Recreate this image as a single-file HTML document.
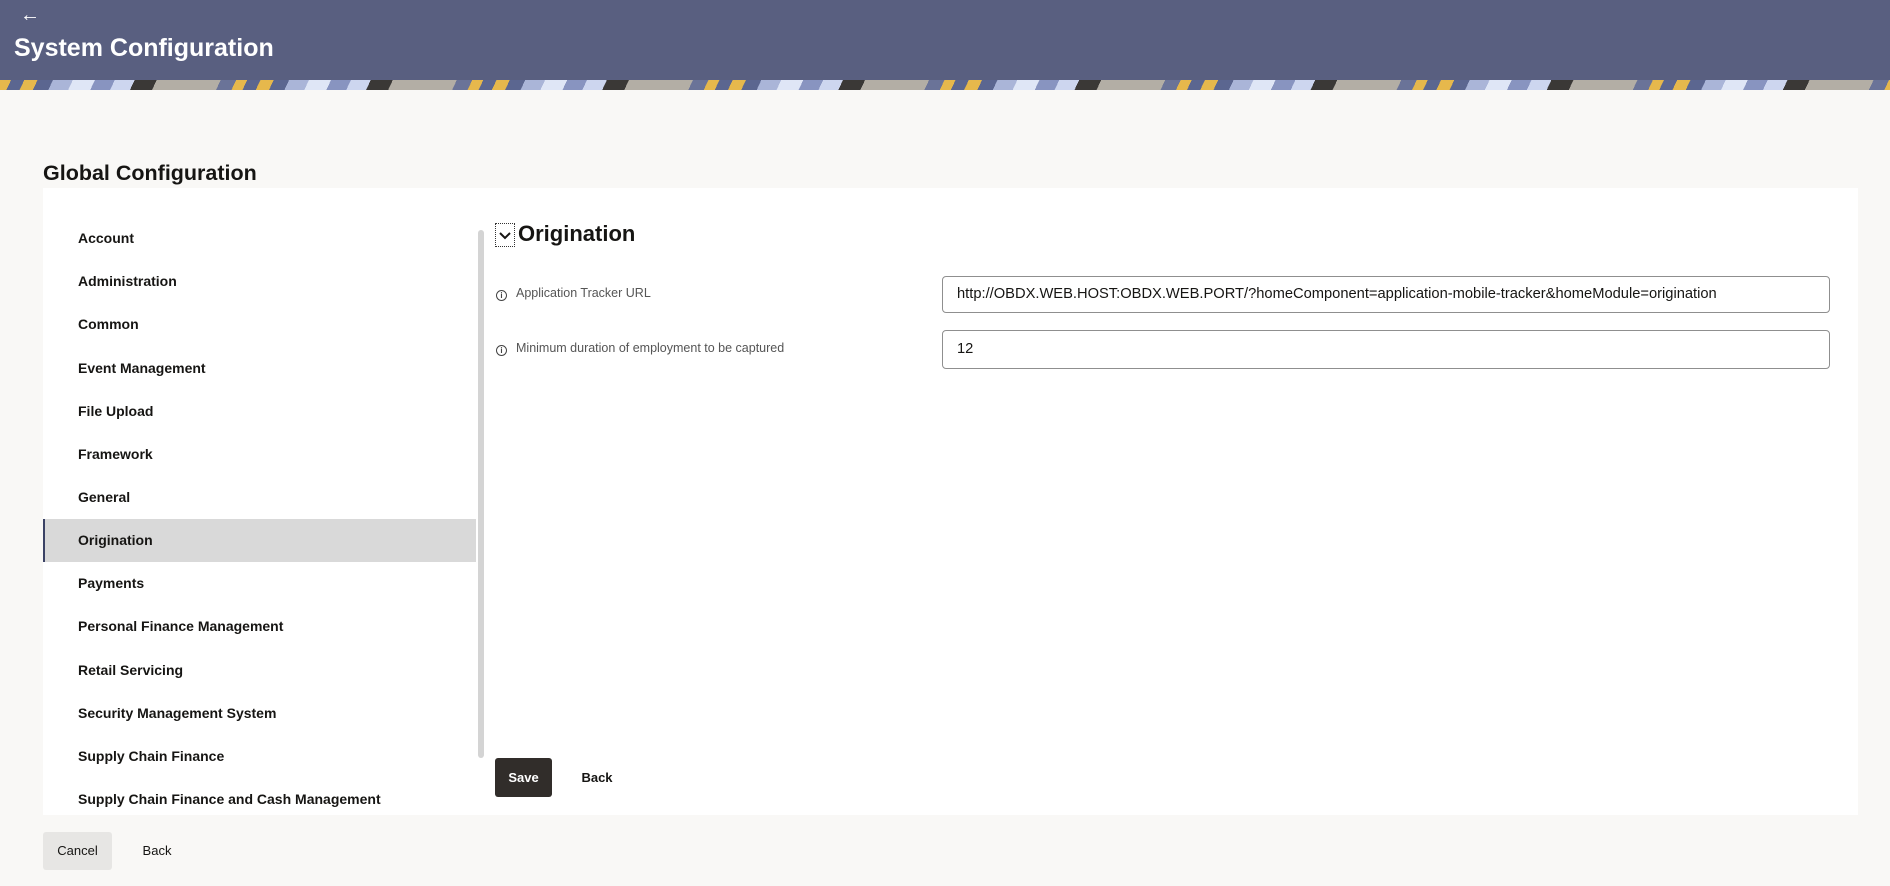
<!DOCTYPE html>
<html><head><meta charset="utf-8"><style>
*{box-sizing:border-box;margin:0;padding:0}
body{width:1890px;height:886px;background:#f9f8f6;font-family:"Liberation Sans",sans-serif;position:relative;overflow:hidden;color:#161513}
.hdr{position:absolute;left:0;top:0;width:1890px;height:80px;background:#595f80}
.band{position:absolute;left:0;top:80px;width:1890px;height:10px;background:repeating-linear-gradient(115deg,#e6b84c 0 10px,#5b6690 10px 22px,#e6b84c 22px 34px,#5b6690 34px 48px,#aab5d8 48px 66px,#dfe6f6 66px 86px,#8894c0 86px 104px,#cdd6ef 104px 122px,#3a3836 122px 142px,#b3aea5 142px 200px,#6a7398 200px 214px)}
.arrow{position:absolute;left:20px;top:4px;color:#fff;font-size:20px}
.title{position:absolute;left:14px;top:34px;color:#fff;font-size:25px;font-weight:bold}
.gc{position:absolute;left:43px;top:161px;font-size:21.5px;font-weight:bold}
.panel{position:absolute;left:43px;top:188px;width:1815px;height:627px;background:#fff}
.item{position:absolute;left:0;width:433px;height:43px;line-height:43px;padding-left:35px;font-size:14px;font-weight:bold;color:#161513}
.item.sel{background:#d9d9d9;border-left:2px solid #3b4265;padding-left:33px}
.sb{position:absolute;left:435px;top:42px;width:6px;height:528px;background:#d4d4d4;border-radius:3px}
.chev{position:absolute;left:495px;top:223px;width:20px;height:24px;border:1px dotted #333}
.h2{position:absolute;left:518px;top:221px;font-size:22px;font-weight:bold}
.lbl{position:absolute;left:496px;font-size:12.5px;color:#555}
.lbl span{display:inline-block;width:11px;height:11px;border:1.3px solid #444;border-radius:50%;font-size:8px;line-height:9px;text-align:center;font-weight:bold;color:#444;margin-right:9px;vertical-align:-1px}
.inp{position:absolute;left:942px;width:888px;border:1px solid #8f8f8f;border-radius:4px;font-size:14.7px;padding-left:14px;color:#161513}
.btn{position:absolute;font-size:13px;font-weight:bold;text-align:center;border-radius:3px}
</style></head><body>
<div class="hdr"></div><div class="band"></div>
<div class="arrow">←</div>
<div class="title">System Configuration</div>
<div class="gc">Global Configuration</div>
<div class="panel">
<div class="item" style="top:29px">Account</div>
<div class="item" style="top:72px">Administration</div>
<div class="item" style="top:115px">Common</div>
<div class="item" style="top:159px">Event Management</div>
<div class="item" style="top:202px">File Upload</div>
<div class="item" style="top:245px">Framework</div>
<div class="item" style="top:288px">General</div>
<div class="item sel" style="top:331px">Origination</div>
<div class="item" style="top:374px">Payments</div>
<div class="item" style="top:417px">Personal Finance Management</div>
<div class="item" style="top:461px">Retail Servicing</div>
<div class="item" style="top:504px">Security Management System</div>
<div class="item" style="top:547px">Supply Chain Finance</div>
<div class="item" style="top:590px">Supply Chain Finance and Cash Management</div>
<div class="sb"></div>
</div>
<div class="chev"><svg width="18" height="22" viewBox="0 0 18 22"><path d="M4 9l5 5 5-5" fill="none" stroke="#161513" stroke-width="2"/></svg></div>
<div class="h2">Origination</div>
<div class="lbl" style="top:286px"><span>i</span>Application Tracker URL</div>
<div class="lbl" style="top:341px"><span>i</span>Minimum duration of employment to be captured</div>
<div class="inp" style="top:276px;height:37px;line-height:35px">http://OBDX.WEB.HOST:OBDX.WEB.PORT/?homeComponent=application-mobile-tracker&amp;homeModule=origination</div>
<div class="inp" style="top:330px;height:39px;line-height:37px">12</div>
<div class="btn" style="left:495px;top:758px;width:57px;height:39px;line-height:39px;background:#312d2a;color:#fff">Save</div>
<div class="btn" style="left:572px;top:758px;width:50px;height:39px;line-height:39px">Back</div>
<div class="btn" style="left:43px;top:832px;width:69px;height:38px;line-height:38px;background:#e7e6e4;font-weight:normal;font-size:13px">Cancel</div>
<div class="btn" style="left:132px;top:832px;width:50px;height:38px;line-height:38px;font-weight:normal">Back</div>
</body></html>
